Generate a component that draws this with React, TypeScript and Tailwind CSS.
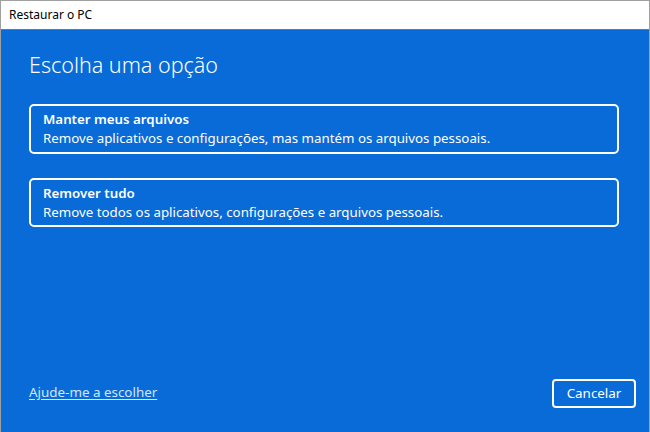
import React from "react";

export default function App() {
  const font = { fontFamily: '"Noto Sans", "Open Sans", sans-serif' };
  return (
    <div className="relative w-[650px] h-[432px] flex flex-col bg-[#a0a0a0] pt-px px-px overflow-hidden" style={font}>
      <div className="h-[29px] shrink-0 bg-white flex items-center px-[8px] text-[12px] text-black border-b border-[#3c7fd0]">
        Restaurar o PC
      </div>
      <div className="flex-1 bg-[#086bd8] flex flex-col pt-[20px] pb-[24px] text-white">
        <div className="px-[28px]">
          <h1 className="text-[21.5px] font-light leading-[30px]">Escolha uma opção</h1>
          <div className="mt-[24px] flex flex-col gap-[24px] mr-[2px]">
            <div className="h-[50px] border-2 border-white rounded-[5px] px-[12px] flex flex-col justify-center">
              <div className="text-[13.3px] font-semibold leading-[19px]">Manter meus arquivos</div>
              <div className="text-[13.3px] leading-[19px]">Remove aplicativos e configurações, mas mantém os arquivos pessoais.</div>
            </div>
            <div className="h-[49px] border-2 border-white rounded-[5px] px-[12px] flex flex-col justify-center">
              <div className="text-[13.3px] font-semibold leading-[19px]">Remover tudo</div>
              <div className="text-[13.3px] leading-[19px]">Remove todos os aplicativos, configurações e arquivos pessoais.</div>
            </div>
          </div>
        </div>
        <div className="mt-auto flex items-end justify-between pl-[28px] pr-[13px]">
          <a className="text-[13.4px] underline underline-offset-2 text-[#d4e6fa] mb-[6px]">Ajude-me a escolher</a>
          <button className="h-[29px] w-[84px] border-2 border-white rounded-[4px] text-[13.4px] text-white">Cancelar</button>
        </div>
      </div>
    </div>
  );
}
